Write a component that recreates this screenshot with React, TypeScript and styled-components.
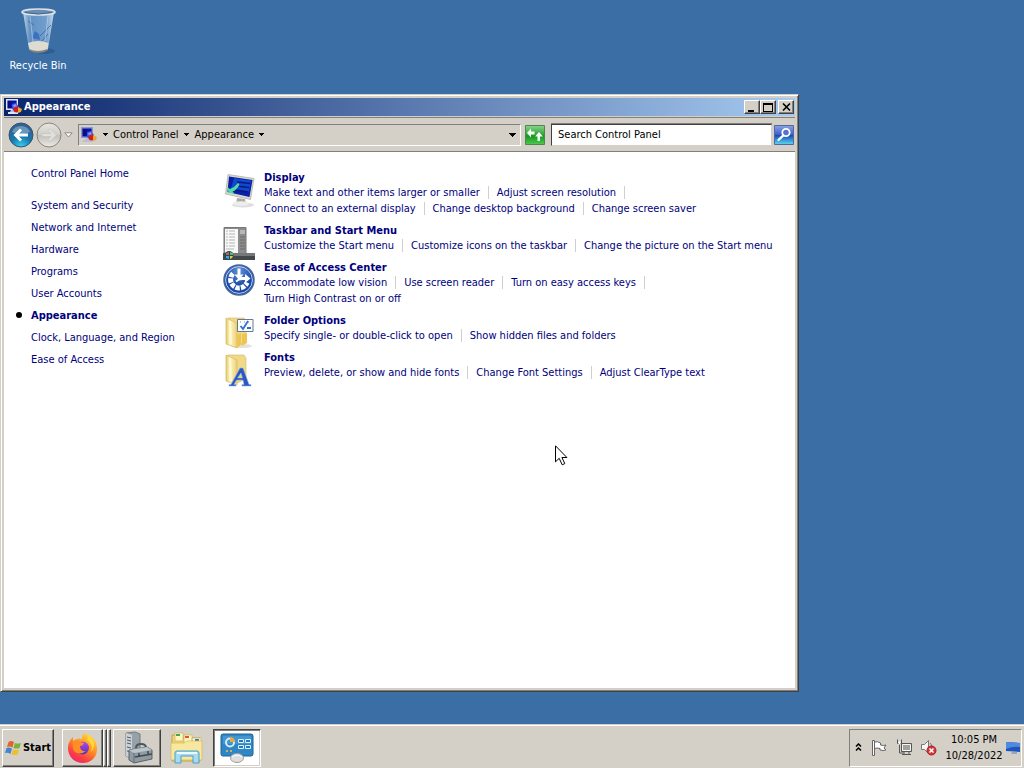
import React from "react";
import styled, { createGlobalStyle } from "styled-components";

const GlobalStyle = createGlobalStyle`
  * { box-sizing: border-box; }
  body { margin: 0; background: #3a6ea5; }
  body, button, input {
    font-family: Tahoma, "DejaVu Sans Condensed", "DejaVu Sans", sans-serif;
    font-size: 11px;
  }
  button { color: #000; }
  svg { display: block; flex: none; }
`;

const Screen = styled.div`
  display: flex;
  flex-direction: column;
  min-height: 100vh;
  overflow: hidden;
`;

const Desktop = styled.main`
  position: relative;
  flex: 1;
  background: #3a6ea5;
`;

const DesktopShortcut = styled.a`
  display: inline-flex;
  flex-direction: column;
  align-items: center;
  gap: 3px;
  width: 76px;
  padding-top: 8px;
  color: #fff;
  line-height: 14px;
  text-decoration: none;
`;

const Window = styled.section`
  position: absolute;
  top: 94px;
  left: 0;
  right: 225px;
  bottom: 32px;
  display: flex;
  flex-direction: column;
  padding: 3px;
  background: #d4d0c8;
  border: 1px solid;
  border-color: #d4d0c8 #404040 #404040 #d4d0c8;
  box-shadow: inset 1px 1px #fff, inset -1px -1px #808080;
`;

const TitleBar = styled.header`
  display: flex;
  align-items: center;
  gap: 2px;
  height: 18px;
  padding: 0 1px 0 2px;
  color: #fff;
  background: linear-gradient(90deg, #0a246a, #a6caf0);
`;

const Title = styled.h1`
  flex: 1;
  margin: 0;
  font-size: 11px;
  line-height: 16px;
`;

const Caption = styled.div`
  display: flex;
`;

const CaptionButton = styled.button<{ $apart?: boolean }>`
  display: grid;
  place-items: center;
  width: 16px;
  height: 14px;
  margin-left: ${(p) => (p.$apart ? 2 : 0)}px;
  padding: 0;
  background: #d4d0c8;
  border: 1px solid;
  border-color: #fff #404040 #404040 #fff;
  box-shadow: inset -1px -1px #808080;
`;

const Frame = styled.div`
  display: flex;
  flex: 1;
  flex-direction: column;
  margin-top: 1px;
  border-top: 1px solid #808080;
`;

const Toolbar = styled.nav`
  display: flex;
  align-items: center;
  height: 34px;
  padding: 0 0 0 4px;
  background: #d4d0c8;
  border-bottom: 1px solid #808080;
`;

const NavButton = styled.button<{ $width: number }>`
  width: ${(p) => p.$width}px;
  height: 26px;
  padding: 0;
  background: none;
  border: 0;
`;

const AddressBar = styled.div`
  display: flex;
  flex: 1;
  align-items: center;
  height: 22px;
  margin-left: 4px;
  padding-left: 2px;
  border: 1px solid;
  border-color: #808080 #fff #fff #808080;
`;

const Crumb = styled.a`
  color: #000;
  line-height: 18px;
  text-decoration: none;
`;

const ArrowButton = styled.button<{ $width?: number }>`
  display: grid;
  place-items: center;
  width: ${(p) => p.$width ?? 16}px;
  height: 20px;
  padding: 0;
  background: none;
  border: 0;
`;

const Spacer = styled.span`
  flex: 1;
`;

const SquareButton = styled.button`
  width: 20px;
  height: 20px;
  margin: 0 1px 0 4px;
  padding: 0;
  background: none;
  border: 0;
`;

const SearchBox = styled.input`
  width: 221px;
  height: 22px;
  margin-left: 5px;
  margin-right: -2px;
  padding: 0 6px;
  color: #000;
  background: #fff;
  border: 1px solid;
  border-color: #404040 #d4d0c8 #d4d0c8 #404040;
  border-radius: 0;
  box-shadow: 0 -1px #808080;
  outline: 0;
  &::placeholder { color: #000; opacity: 1; }
`;

const Content = styled.div`
  display: flex;
  flex: 1;
  background: #fff;
`;

const Sidebar = styled.nav`
  width: 219px;
  flex: none;
  padding: 11px 0 0 10px;
`;

const SideList = styled.ul`
  margin: 0;
  padding: 9px 0 0;
  list-style: none;
`;

const SideItem = styled.li<{ $current?: boolean }>`
  display: flex;
  align-items: center;
  height: 22px;
  font-weight: ${(p) => (p.$current ? 700 : 400)};
  &::before {
    content: "";
    width: 6px;
    height: 6px;
    margin: 0 9px 0 2px;
    border-radius: 50%;
    background: ${(p) => (p.$current ? "#000" : "transparent")};
  }
`;

const SideLink = styled.a`
  color: #00007c;
  text-decoration: none;
`;

const HomeLine = styled.div`
  height: 22px;
  padding-left: 17px;
  line-height: 22px;
`;

const Categories = styled.div`
  flex: 1;
  padding: 19px 4px 0 0;
`;

const Category = styled.section`
  display: flex;
  gap: 9px;
`;

const CategoryIcon = styled.div`
  flex: none;
  width: 32px;
  padding-top: 3px;
`;

const CategoryBody = styled.div`
  flex: 1;
  padding-bottom: 8px;
`;

const CategoryTitle = styled.h2`
  margin: 0;
  font-size: 11px;
  line-height: 13px;
`;

const TaskList = styled.ul`
  display: flex;
  flex-wrap: wrap;
  margin: 0;
  padding: 0;
  list-style: none;
`;

const Task = styled.li`
  display: flex;
  align-items: center;
  height: 16px;
  margin-right: 8px;
  white-space: nowrap;
  &:not(:last-child)::after {
    content: "";
    width: 1px;
    height: 13px;
    margin-left: 8px;
    background: #cfcfcf;
  }
`;

const Taskbar = styled.footer`
  display: flex;
  align-items: center;
  height: 44px;
  padding: 2px 2px 0;
  background: #d4d0c8;
  border-top: 1px solid #d4d0c8;
  box-shadow: inset 0 1px #fff;
`;

const TaskButton = styled.button<{ $width: number; $left?: number; $look?: "flat" | "pressed" }>`
  display: flex;
  align-items: center;
  justify-content: center;
  gap: 1px;
  width: ${(p) => p.$width}px;
  height: 38px;
  margin-left: ${(p) => p.$left ?? 0}px;
  padding: 0;
  font-weight: 700;
  background: ${(p) => (p.$look === "pressed" ? "#fff" : "#d4d0c8")};
  border: 1px solid;
  border-color: ${(p) =>
    p.$look === "flat" ? "#d4d0c8" : p.$look === "pressed" ? "#404040 #fff #fff #404040" : "#fff #404040 #404040 #fff"};
  box-shadow: ${(p) =>
    p.$look === "flat" ? "none" : p.$look === "pressed" ? "inset 1px 1px #808080, inset -1px -1px #d4d0c8" : "inset -1px -1px #808080"};
`;

const StackEdge = styled.span`
  width: 4px;
  height: 38px;
  border: 1px solid;
  border-color: #fff #404040 #404040 #fff;
  box-shadow: inset -1px -1px #808080;
`;

const Tray = styled.div`
  display: flex;
  align-items: center;
  height: 38px;
  margin-left: auto;
  padding-left: 4px;
  border: 1px solid;
  border-color: #808080 #fff #fff #808080;
`;

const TrayButton = styled.button<{ $width: number }>`
  display: grid;
  place-items: center;
  width: ${(p) => p.$width}px;
  height: 24px;
  padding: 0;
  background: none;
  border: 0;
`;

const Clock = styled.time`
  width: 62px;
  line-height: 16px;
  text-align: center;
  white-space: nowrap;
`;

const Pointer = styled.svg`
  position: absolute;
  top: 445px;
  left: 555px;
`;

const Down = ({ outline = false, wide = false }: { outline?: boolean; wide?: boolean }) => {
  if (outline) {
    return <svg width="9" height="6" viewBox="0 0 9 6"><path d="M.8.8h7.400L4.500 5z" fill="#fff" stroke="#8a8a86" /></svg>;
  }
  return wide ? (
    <svg width="7" height="4" viewBox="0 0 7 4" shapeRendering="crispEdges"><path d="M0 0h7v1H6v1H5v1H4v1H3V3H2V2H1V1H0z" /></svg>
  ) : (
    <svg width="5" height="3" viewBox="0 0 5 3" shapeRendering="crispEdges"><path d="M0 0h5v1H4v1H3v1H2V2H1V1H0z" /></svg>
  );
};

const PanelGlyph = ({ light = false }: { light?: boolean }) => (
  <svg width="16" height="16" viewBox="0 0 16 16">
    <path d="M.7.700h10.600v9.600H.7z" fill="#0712a8" stroke={light ? "#dfe6fb" : "#8d98cc"} strokeWidth="1.400" />
    <path d="M2 2h3v7H2z" fill="#0a0d80" />
    <path d="M5 11h4l1 2H4z" fill="#b4bfe0" />
    <path d="M2 13h10v2H2z" fill={light ? "#dce5fa" : "#b9c0d4"} />
    <path d="M6 5l4-1 3 4-3 5-4-3z" fill="#2f52e0" />
    <path d="M7 6l3-1 1 3-3 1z" fill="#7b9bfa" />
    <circle cx="10.500" cy="10.500" r="3" fill="#d51c1c" />
    <path d="M12 8l4 2-1 3-3 1z" fill="#e9a92c" />
  </svg>
);

const BinIcon = () => (
  <svg width="40" height="48" viewBox="0 0 40 48">
    <defs>
      <linearGradient id="bin" x2="1">
        <stop stopColor="#dbe7f2" stopOpacity=".9" /><stop offset=".22" stopColor="#6f9dce" stopOpacity=".75" />
        <stop offset=".75" stopColor="#84aedb" stopOpacity=".75" /><stop offset="1" stopColor="#e6eff7" stopOpacity=".85" />
      </linearGradient>
    </defs>
    <ellipse cx="26" cy="43" rx="11" ry="3" fill="#1c4474" opacity=".4" />
    <path d="M5 4l6 37q10 5 19 0l6-37z" fill="url(#bin)" />
    <path d="M10 35q10-4 20.500 0l-1 7q-9 4-18 0z" fill="#dedcd1" />
    <path d="M11 41q9 4 18 0v2q-9 4-17 0z" fill="#85857f" />
    <path d="M14 30l3-7 4 3 1 6z" fill="#2863bd" opacity=".7" />
    <path d="M22 28l11-11M10 13l6 4M24 33l6-7" stroke="#355f92" opacity=".7" />
    <path d="M12 8l3 26M30 8l-3 25" stroke="#dceafa" opacity=".45" />
    <ellipse cx="20.500" cy="4" rx="16.500" ry="3" fill="#6b8db1" stroke="#dce4ea" strokeWidth="1.600" />
    <path d="M7 4.500q13 3 27 0" fill="none" stroke="#44688d" />
  </svg>
);

const BackIcon = () => (
  <svg width="26" height="26" viewBox="0 0 26 26">
    <defs><radialGradient id="back" cx=".5" cy="1" r=".9"><stop stopColor="#38d5f4" /><stop offset=".5" stopColor="#1778ae" /><stop offset="1" stopColor="#36608e" /></radialGradient></defs>
    <circle cx="13" cy="13" r="12" fill="url(#back)" stroke="#35546f" />
    <path d="M4 10a9.500 9 0 0 1 18 0q-9 4-18 0z" fill="#c2dced" opacity=".4" />
    <path d="M5.500 13L12 6.500l2 2-3 3h9v3h-9l3 3-2 2z" fill="#fff" />
  </svg>
);

const ForwardIcon = () => (
  <svg width="26" height="26" viewBox="0 0 26 26">
    <defs><linearGradient id="fwd" x2="0" y2="1"><stop stopColor="#e7e5e0" /><stop offset=".48" stopColor="#d1cfca" /><stop offset=".52" stopColor="#c3c0ba" /><stop offset="1" stopColor="#eceae6" /></linearGradient></defs>
    <circle cx="13" cy="13" r="12" fill="url(#fwd)" stroke="#85847f" />
    <path d="M20.500 13L14 6.500l-2 2 3 3H6v3h9l-3 3 2 2z" fill="#e2e0dc" stroke="#c6c3bd" strokeWidth=".7" />
  </svg>
);

const RefreshIcon = () => (
  <svg width="20" height="20" viewBox="0 0 20 20">
    <defs><linearGradient id="ref" x2="0" y2="1"><stop stopColor="#8bd38d" /><stop offset=".45" stopColor="#35a83c" /><stop offset=".55" stopColor="#17951f" /><stop offset="1" stopColor="#4ccb50" /></linearGradient></defs>
    <path d="M.5.500h19v19H.5z" fill="url(#ref)" stroke="#4a8a4f" />
    <path d="M2 8l4-4.500v3h3.500v3H6v3zM18 11.500L14 7l-4 4.500h2.500V16H15v-4.500z" fill="#f2fff2" />
  </svg>
);

const SearchIcon = () => (
  <svg width="20" height="20" viewBox="0 0 20 20">
    <defs><linearGradient id="sea" x2="0" y2="1"><stop stopColor="#8ba3e5" /><stop offset=".48" stopColor="#405ec8" /><stop offset=".52" stopColor="#174ab7" /><stop offset="1" stopColor="#5ddbf0" /></linearGradient></defs>
    <path d="M.5.500h19v19H.5z" fill="url(#sea)" stroke="#5268a3" />
    <circle cx="12" cy="7.500" r="3.700" fill="#5273d0" stroke="#fff" strokeWidth="1.800" />
    <path d="M9.300 10.300L4.500 15" stroke="#fff" strokeWidth="2.400" strokeLinecap="round" />
  </svg>
);

const DisplayIcon = () => (
  <svg width="32" height="34" viewBox="0 0 32 34">
    <ellipse cx="20" cy="31" rx="11" ry="2.500" fill="#dededc" />
    <path d="M14 24l8 1 1 5-10 1z" fill="#a9acaa" />
    <ellipse cx="18" cy="29.500" rx="8" ry="2.300" fill="#ededeb" />
    <path d="M5 .5l26 4-3.500 21L2.500 20z" fill="#d5d7d0" stroke="#a8aaa5" strokeWidth=".7" />
    <path d="M6 2.500l23.500 3.500-3 17L4.500 18z" fill="#0a1fa5" />
    <path d="M11 4l17 2.500-2 11-18-3z" fill="#1458d8" opacity=".75" />
    <path d="M14 8l13 1.500M13 12l13 1.500M12 16l13 2" stroke="#0a1788" strokeWidth="1.600" />
    <path d="M4.500 13l2.500 2q5-2 8-6l1.500 1.500q-3 6-7 7l2 2-6-.5z" fill="#4fdca8" />
  </svg>
);

const StartMenuIcon = () => (
  <svg width="32" height="33" viewBox="0 0 32 33">
    <path d="M1 .5h22v27H1z" fill="#8c8c8c" stroke="#777" />
    <path d="M2 2h13v24H2z" fill="#f8f8f8" />
    <path d="M3 4h2m1 0h6M3 7h2m1 0h6M3 10h2m1 0h6M3 13h2m1 0h6M3 16h2m1 0h6M3 19h2m1 0h6M3 22h8" stroke="#b5b5b5" />
    <path d="M17 3h5v4h-5z" fill="#b7b7b7" /><path d="M17 10h5m-5 3h5m-5 3h5m-5 3h5m-5 3h5" stroke="#6c6c6c" />
    <path d="M0 26h32v7H0z" fill="#45484a" /><path d="M10 26h22v3H10z" fill="#74787a" />
    <circle cx="6" cy="28.500" r="4.500" fill="#174f61" />
    <path d="M3 26l3-1v3H3z" fill="#d75c38" /><path d="M7 25l3 1v2H7z" fill="#70b44b" />
    <path d="M3 29h3v3l-3-1z" fill="#4ba1df" /><path d="M7 29h3l-1 2-2 1z" fill="#edc644" />
  </svg>
);

const AccessIcon = () => (
  <svg width="32" height="32" viewBox="0 0 32 32">
    <defs><radialGradient id="access" cy=".2"><stop stopColor="#6291d8" /><stop offset="1" stopColor="#164aa6" /></radialGradient></defs>
    <circle cx="16" cy="16" r="15" fill="url(#access)" stroke="#46639b" strokeWidth="1.500" />
    <circle cx="16" cy="16" r="13.400" fill="none" stroke="#b9cdee" />
    <path d="M10 9.500a8.500 8.500 0 1 0 14 9" fill="none" stroke="#fff" strokeWidth="5" strokeDasharray="4.300 1.100" />
    <path d="M16 4.500v8M17 14.500h6" stroke="#fff" strokeWidth="3" />
    <path d="M11.500 10.500l4.500 5.500 4.500-5.500zM22 10l5.500 4.500L22 19z" fill="#fff" />
    <path d="M13 17.500l3-2 6-1" fill="none" stroke="#fff" strokeWidth="2" />
  </svg>
);

const FolderArt = () => (
  <>
    <defs><linearGradient id="fold" x2="1"><stop stopColor="#e3c766" /><stop offset=".35" stopColor="#fff6c4" /><stop offset="1" stopColor="#ecd07a" /></linearGradient></defs>
    <path d="M5 1h16l2 3v21l-11 5z" fill="#f0d988" stroke="#d3b862" strokeWidth=".6" />
    <path d="M3 1l11 5v25L3 27z" fill="url(#fold)" stroke="#d5ba66" strokeWidth=".7" />
    <path d="M7 4l1 23" stroke="#fff9d4" strokeWidth="2" />
  </>
);

const FolderOptionsIcon = () => (
  <svg width="32" height="32" viewBox="0 0 32 32">
    <ellipse cx="19" cy="29" rx="10" ry="2" fill="#e2e2e0" />
    <FolderArt />
    <path d="M14.500 2.500h15.500v12H14.500z" fill="#fcfdff" stroke="#667a91" />
    <path d="M17 5h1m3 0h1m3 0h1" stroke="#8191a4" />
    <path d="M17.500 9l2.500 3 5-8M24 11h4" fill="none" stroke="#3270ce" strokeWidth="1.800" />
    <path d="M14 18l4-2v12l-4 3zM19 17l5-1v10l-5 3z" fill="#efc551" />
  </svg>
);

const FontsIcon = () => (
  <svg width="32" height="34" viewBox="0 0 32 34">
    <FolderArt />
    <path d="M8 30.500L17 14h3l6 16.500h2V32h-9v-1.500h2L20 26h-6.500L11 30.500h2V32H6v-1.500zM14.500 24H19.500L18 19z" fill="#2a57c4" fillRule="evenodd" stroke="#8faee6" strokeWidth=".6" />
  </svg>
);

const WindowsIcon = () => (
  <svg width="17" height="16" viewBox="0 0 17 16">
    <path d="M3.500 2q2.500-2 5.500 0L7.500 7.500Q5 6 2 7z" fill="#e6632c" />
    <path d="M10 3q3 1 6 0l-1.500 5q-3 1-6 0z" fill="#73b53e" />
    <path d="M1.500 8q3-1 5.500.5L5.500 14Q3 12 0 13z" fill="#4285d2" />
    <path d="M8 9.500q3 1 6 0l-1.500 5q-3 1-6 0z" fill="#f2bd2a" />
  </svg>
);

const FirefoxIcon = () => (
  <svg width="32" height="32" viewBox="0 0 32 32">
    <defs>
      <linearGradient id="fox" x1=".8" x2=".2" y2="1"><stop stopColor="#ffe13d" /><stop offset=".45" stopColor="#ff8b22" /><stop offset=".75" stopColor="#fb3f45" /><stop offset="1" stopColor="#ed2271" /></linearGradient>
      <linearGradient id="globe" x2="0" y2="1"><stop stopColor="#b247e5" /><stop offset="1" stopColor="#5234b6" /></linearGradient>
    </defs>
    <path d="M17 1q4 2 6 6 0-3-1-4 7 4 8 12c1 10-6 16-14 16S1 25 1 16c0-5 2-8 5-11v4l4-2q2-1 5 0 0-4 2-6z" fill="url(#fox)" />
    <circle cx="15.500" cy="16" r="6.500" fill="url(#globe)" />
    <path d="M6 9q4-2 7 1l4 1q-1 3-4 3 0 6 6 5-7 5-12 0-2-4-1-10z" fill="#ff8d28" />
    <path d="M20 8q7 4 4 12 6-7 1-14-2-3-5-4 2 3 0 6z" fill="#ffd63c" />
  </svg>
);

const ServerIcon = () => (
  <svg width="32" height="34" viewBox="0 0 32 34">
    <path d="M5 2l9-1 5 2v23l-8 2-6-3z" fill="#96a1a8" stroke="#717b82" />
    <path d="M5 2l6 2v24l-6-3z" fill="#cbd1d4" />
    <path d="M6 6l4 1M6 9l4 1M6 12l4 1M6 16l4 1M6 20l4 1" stroke="#4f5d66" />
    <path d="M15 17q0-4 5-4t5 4" fill="none" stroke="#4c565d" strokeWidth="2" />
    <path d="M8 19l18-3 5 3v9l-18 4-5-3z" fill="#8f9ba3" stroke="#596269" />
    <path d="M8 19l5 3 18-3-5-3z" fill="#bcc5ca" /><path d="M13 22v10" stroke="#626d74" />
    <path d="M14 26l17-3M18 22v4M27 20v4" stroke="#3f4a51" strokeWidth="1.500" />
  </svg>
);

const ExplorerIcon = () => (
  <svg width="34" height="32" viewBox="0 0 34 32">
    <path d="M2 3h9l2 3h17v23H2z" fill="#efd675" stroke="#c4a344" />
    <path d="M5 1h8v8H5zM14 3h8v8h-8zM22 6h9v8h-9z" fill="#fff6bf" stroke="#cfb35a" strokeWidth=".7" />
    <path d="M6 2h4v2H6z" fill="#42a55c" /><path d="M15 4h4v2h-4z" fill="#df5836" /><path d="M25 7h4v2h-4z" fill="#3d79c6" />
    <path d="M1 11h13l3-2h15v19H1z" fill="#f8e79e" stroke="#d4b95e" strokeWidth=".7" />
    <path d="M5 31V21q0-2 2-2h20q2 0 2 2v10h-6v-7H11v7z" fill="#a5dcf5" stroke="#4b9fc8" />
    <path d="M7 21h20" stroke="#ecfaff" strokeWidth="2" />
  </svg>
);

const ControlPanelIcon = () => (
  <svg width="34" height="30" viewBox="0 0 34 30">
    <path d="M3 1h28q2 0 2 2v18q0 2-2 2H3q-2 0-2-2V3q0-2 2-2z" fill="#2f86c4" stroke="#1d6298" />
    <path d="M3 3h28v8H3z" fill="#57a6da" opacity=".5" />
    <circle cx="10" cy="9.500" r="4" fill="none" stroke="#d2ecfa" strokeWidth="2" />
    <path d="M10 9V4a5 5 0 0 1 5 5z" fill="#f1a83a" />
    <path d="M18.500 6.500h5v3h-5zM25.500 6.500h5v3h-5zM18.500 12.500h5v3h-5zM25.500 12.500h5v3h-5z" fill="#2d79b6" stroke="#d7f1ff" />
    <circle cx="7" cy="18" r="1" fill="#f7c34c" /><circle cx="11" cy="18" r="1" fill="#f7c34c" />
    <ellipse cx="17" cy="25" rx="6.500" ry="4.500" fill="#dedfdd" stroke="#999e9f" />
    <path d="M12 24q5-4 10 0" fill="none" stroke="#fff" />
  </svg>
);

const NetworkTrayIcon = () => (
  <svg width="17" height="17" viewBox="0 0 17 17">
    <path d="M5.500 4.500h10v8h-10zM8 13v2m5-2v2M6 15.500h9" fill="#a2a19d" stroke="#555" />
    <path d="M6.500 5.500h8v6h-8z" fill="none" stroke="#f5f5f2" />
    <path d="M1.500.500v4h4v-4M3.500 5v9h4" fill="none" stroke="#555" /><path d="M2.500 2.500h2v3h-2z" fill="#fff" />
  </svg>
);

const SoundTrayIcon = () => (
  <svg width="17" height="17" viewBox="0 0 17 17">
    <path d="M1.500 5.500h3l4-4v13l-4-4h-3z" fill="#f6f5f1" stroke="#777" />
    <path d="M10 4q2 2 2 4" fill="none" stroke="#777" />
    <circle cx="11.500" cy="11.500" r="4.500" fill="#d33837" stroke="#a81e24" />
    <path d="M9.500 9.500l4 4m0-4l-4 4" stroke="#fff" strokeWidth="1.500" />
  </svg>
);

const categories = [
  { title: "Display", icon: <DisplayIcon />, tasks: ["Make text and other items larger or smaller", "Adjust screen resolution", "Connect to an external display", "Change desktop background", "Change screen saver"] },
  { title: "Taskbar and Start Menu", icon: <StartMenuIcon />, tasks: ["Customize the Start menu", "Customize icons on the taskbar", "Change the picture on the Start menu"] },
  { title: "Ease of Access Center", icon: <AccessIcon />, tasks: ["Accommodate low vision", "Use screen reader", "Turn on easy access keys", "Turn High Contrast on or off"] },
  { title: "Folder Options", icon: <FolderOptionsIcon />, tasks: ["Specify single- or double-click to open", "Show hidden files and folders"] },
  { title: "Fonts", icon: <FontsIcon />, tasks: ["Preview, delete, or show and hide fonts", "Change Font Settings", "Adjust ClearType text"] },
];

const sideLinks = ["System and Security", "Network and Internet", "Hardware", "Programs", "User Accounts", "Appearance", "Clock, Language, and Region", "Ease of Access"];

export default function App() {
  return (
    <Screen>
      <GlobalStyle />
      <Desktop>
        <DesktopShortcut href="#bin"><BinIcon />Recycle Bin</DesktopShortcut>
        <Window aria-label="Appearance">
          <TitleBar>
            <PanelGlyph light />
            <Title>Appearance</Title>
            <Caption>
              <CaptionButton aria-label="Minimize"><svg width="10" height="9"><path d="M1 7h6v2H1z" /></svg></CaptionButton>
              <CaptionButton aria-label="Maximize"><svg width="10" height="9" shapeRendering="crispEdges"><path d="M0 0h10v9H0zM1 2v6h8V2z" fillRule="evenodd" /></svg></CaptionButton>
              <CaptionButton aria-label="Close" $apart><svg width="9" height="8"><path d="M1 .5l7 7m0-7l-7 7" stroke="#000" strokeWidth="1.600" /></svg></CaptionButton>
            </Caption>
          </TitleBar>
          <Frame>
            <Toolbar aria-label="Navigation">
              <NavButton aria-label="Back" $width={28}><BackIcon /></NavButton>
              <NavButton aria-label="Forward" $width={27} disabled><ForwardIcon /></NavButton>
              <ArrowButton aria-label="Recent pages" $width={11}><Down outline /></ArrowButton>
              <AddressBar>
                <PanelGlyph />
                <ArrowButton aria-label="Show locations"><Down /></ArrowButton>
                <Crumb href="#control-panel">Control Panel</Crumb>
                <ArrowButton aria-label="Show Control Panel items"><Down /></ArrowButton>
                <Crumb href="#appearance">Appearance</Crumb>
                <ArrowButton aria-label="Show Appearance items"><Down /></ArrowButton>
                <Spacer />
                <ArrowButton aria-label="Previous locations"><Down wide /></ArrowButton>
              </AddressBar>
              <SquareButton aria-label="Refresh"><RefreshIcon /></SquareButton>
              <SearchBox type="text" aria-label="Search Control Panel" placeholder="Search Control Panel" />
              <SquareButton aria-label="Search"><SearchIcon /></SquareButton>
            </Toolbar>
            <Content>
              <Sidebar aria-label="Control Panel categories">
                <HomeLine><SideLink href="#home">Control Panel Home</SideLink></HomeLine>
                <SideList>
                  {sideLinks.map((text) => (
                    <SideItem key={text} $current={text === "Appearance"}><SideLink href="#category">{text}</SideLink></SideItem>
                  ))}
                </SideList>
              </Sidebar>
              <Categories>
                {categories.map(({ title, icon, tasks }) => (
                  <Category key={title}>
                    <CategoryIcon>{icon}</CategoryIcon>
                    <CategoryBody>
                      <CategoryTitle><SideLink href="#item">{title}</SideLink></CategoryTitle>
                      <TaskList>
                        {tasks.map((task) => (
                          <Task key={task}><SideLink href="#task">{task}</SideLink></Task>
                        ))}
                      </TaskList>
                    </CategoryBody>
                  </Category>
                ))}
              </Categories>
            </Content>
          </Frame>
        </Window>
        <Pointer width="13" height="21" viewBox="0 0 13 21" aria-hidden="true">
          <path d="M.5.800v16l3.700-3.500 3 6.500 2.600-1.200-2.900-6.100h5z" fill="#fff" stroke="#000" />
        </Pointer>
      </Desktop>
      <Taskbar>
        <TaskButton $width={52}><WindowsIcon />Start</TaskButton>
        <TaskButton $width={41} $left={8} aria-label="Firefox"><FirefoxIcon /></TaskButton>
        <StackEdge /><StackEdge />
        <TaskButton $width={48} $left={2} aria-label="Server Manager"><ServerIcon /></TaskButton>
        <TaskButton $width={48} $left={2} $look="flat" aria-label="Windows Explorer"><ExplorerIcon /></TaskButton>
        <TaskButton $width={48} $left={2} $look="pressed" aria-label="Control Panel"><ControlPanelIcon /></TaskButton>
        <Tray>
          <TrayButton $width={8} aria-label="Show hidden icons"><svg width="7" height="9" viewBox="0 0 7 9"><path d="M1 3.500l2.500-2.500L6 3.500M1 7.500L3.500 5 6 7.500" fill="none" stroke="#000" strokeWidth="1.500" /></svg></TrayButton>
          <TrayButton $width={34} aria-label="Action Center"><svg width="16" height="16" viewBox="0 0 16 16"><path d="M1.500.500h2v15h-2zM3.500 2q3-1 6 1v2q3 1 5.500 0l-2 3 2 2q-3 1-6 0V8.500q-3-1-5.500 0z" fill="#fff" stroke="#666" /></svg></TrayButton>
          <TrayButton $width={17} aria-label="Network"><NetworkTrayIcon /></TrayButton>
          <TrayButton $width={30} aria-label="Volume muted"><SoundTrayIcon /></TrayButton>
          <Clock>10:05 PM<br />10/28/2022</Clock>
          <TrayButton $width={16} aria-label="Show desktop"><svg width="15" height="14" viewBox="0 0 15 14"><path d="M0 1l14 1v9L0 10z" fill="#1e54bb" /><path d="M0 1l14 1v4Q7 5 0 8z" fill="#4d8ae0" /><path d="M6 11h5v2H5z" fill="#96a7c4" /></svg></TrayButton>
        </Tray>
      </Taskbar>
    </Screen>
  );
}
